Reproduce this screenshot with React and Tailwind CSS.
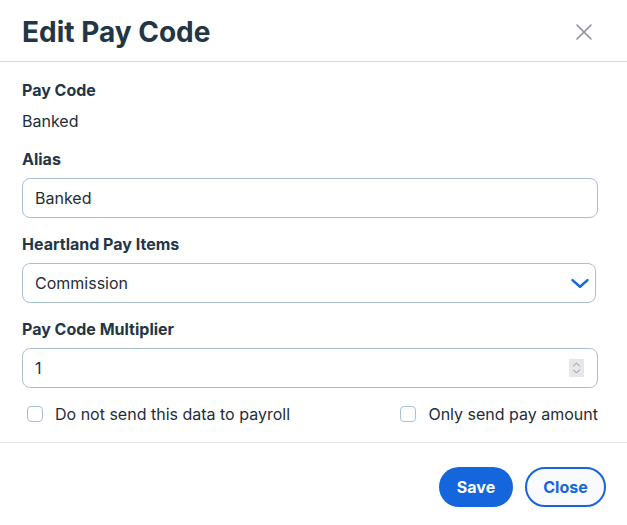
import { useState } from 'react'

function ChevronDown() {
  return (
    <svg width="20" height="20" viewBox="0 0 24 24" fill="none" stroke="#1668dc" strokeWidth="3" strokeLinecap="round" strokeLinejoin="round">
      <path d="M3 8.5l9 8 9-8" />
    </svg>
  )
}

function Spinner() {
  return (
    <div className="w-[15px] h-[18px] bg-[#e6e7ea] flex items-center justify-center">
      <svg width="9" height="14" viewBox="0 0 9 14" fill="none" stroke="#8b8f96" strokeWidth="1" strokeLinecap="round" strokeLinejoin="round">
        <path d="M1.5 5L4.5 2l3 3" />
        <path d="M1.5 9l3 3 3-3" />
      </svg>
    </div>
  )
}

function Checkbox({ label, onChange }) {
  return (
    <label className="flex items-center gap-[12px] cursor-pointer">
      <span
        onClick={onChange}
        className="w-[16px] h-[16px] rounded-[4px] border border-[#a9bfd3] bg-white"
      />
      <span className="text-[16px] text-[#1f2d3a]">{label}</span>
    </label>
  )
}

export default function App() {
  const [alias, setAlias] = useState('Banked')
  const [multiplier, setMultiplier] = useState('1')
  const [noSend, setNoSend] = useState(false)
  const [onlyPay, setOnlyPay] = useState(false)

  return (
    <div className="w-[627px] h-[525px] bg-white text-[#1f2d3a]" style={{ fontFamily: 'Inter, "Noto Sans", sans-serif' }}>
      {/* Header */}
      <div className="h-[62px] border-b border-[#cfd8e0] flex items-center justify-between pl-[22px] pr-[34px] pt-[3px]">
        <h1 className="text-[28px] font-bold text-[#233645]">Edit Pay Code</h1>
        <button className="text-[#8a9099]">
          <svg width="18" height="18" viewBox="0 0 18 18" fill="none" stroke="currentColor" strokeWidth="1.6" strokeLinecap="round">
            <path d="M2 2l14 14M16 2L2 16" />
          </svg>
        </button>
      </div>

      {/* Body */}
      <div className="px-[22px] pt-[18px] pb-[16px] border-b border-[#dfe5ea]">
        <div className="text-[16px] font-bold text-[#233645] leading-[20px]">Pay Code</div>
        <div className="mt-[11px] text-[16px] leading-[20px]">Banked</div>

        <div className="mt-[18px] text-[16px] font-bold text-[#233645] leading-[20px]">Alias</div>
        <input
          value={alias}
          onChange={(e) => setAlias(e.target.value)}
          className="mt-[9px] w-[576px] h-[40px] rounded-[8px] border border-[#a9bfd3] px-[12px] text-[16px] text-[#1f2d3a] outline-none"
        />

        <div className="mt-[16px] text-[16px] font-bold text-[#233645] leading-[20px]">Heartland Pay Items</div>
        <div className="mt-[9px] w-[574px] h-[40px] rounded-[8px] border border-[#a9bfd3] pl-[12px] pr-[5px] flex items-center justify-between">
          <span className="text-[16px]">Commission</span>
          <ChevronDown />
        </div>

        <div className="mt-[16px] text-[16px] font-bold text-[#233645] leading-[20px]">Pay Code Multiplier</div>
        <div className="mt-[9px] w-[576px] h-[40px] rounded-[8px] border border-[#a9bfd3] pl-[12px] pr-[13px] flex items-center justify-between">
          <input
            value={multiplier}
            onChange={(e) => setMultiplier(e.target.value)}
            className="flex-1 text-[16px] outline-none bg-transparent"
          />
          <Spinner />
        </div>

        <div className="mt-[14px] w-[576px] pl-[5px] flex items-center justify-between leading-[24px]">
          <Checkbox label="Do not send this data to payroll" onChange={() => setNoSend(!noSend)} />
          <Checkbox label="Only send pay amount" onChange={() => setOnlyPay(!onlyPay)} />
        </div>
      </div>

      {/* Footer */}
      <div className="flex justify-end gap-[12px] pt-[24px] pr-[21px]">
        <button className="w-[74px] h-[40px] rounded-full bg-[#1565dc] text-white text-[16px] font-bold">Save</button>
        <button className="w-[81px] h-[40px] rounded-full border-2 border-[#1565dc] bg-[#f8fafd] text-[#1565dc] text-[16px] font-bold">Close</button>
      </div>
    </div>
  )
}
